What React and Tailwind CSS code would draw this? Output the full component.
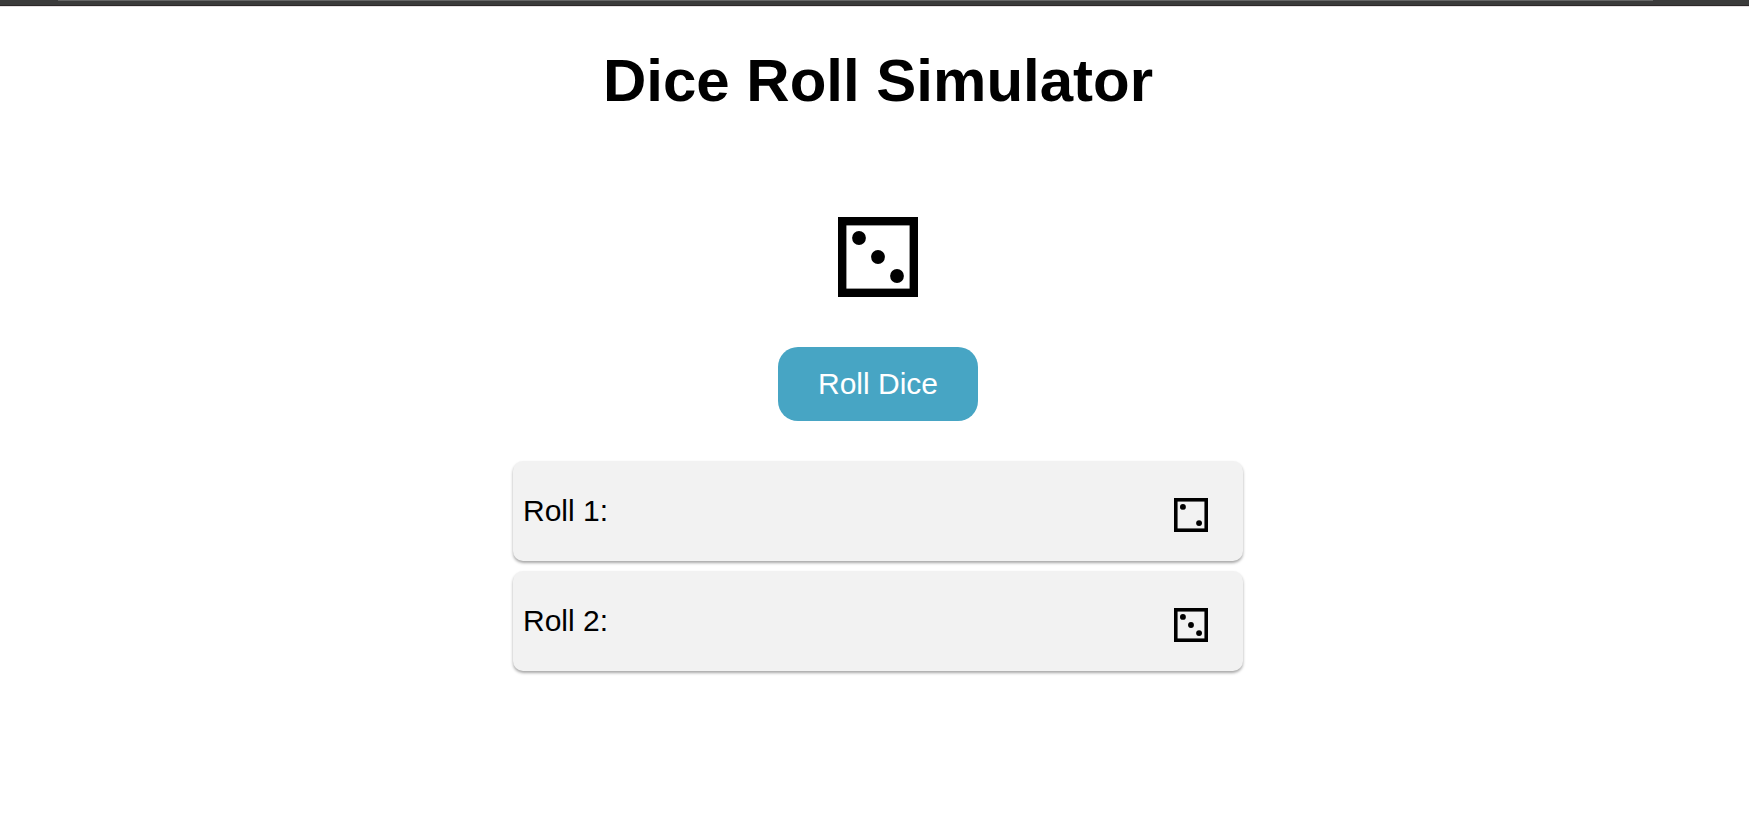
const PIPS = {
  1: [[40, 40]],
  2: [[21, 21], [59, 59]],
  3: [[21, 21], [40, 40], [59, 59]],
  4: [[21, 21], [59, 21], [21, 59], [59, 59]],
  5: [[21, 21], [59, 21], [40, 40], [21, 59], [59, 59]],
  6: [[21, 21], [59, 21], [21, 40], [59, 40], [21, 59], [59, 59]],
};

function Die({ value, className }) {
  return (
    <svg viewBox="0 0 80 80" className={className} role="img" aria-label={`Die showing ${value}`}>
      <rect x="4.2" y="4.2" width="71.6" height="71.6" fill="none" stroke="currentColor" strokeWidth="8.4" />
      {PIPS[value].map(([x, y]) => (
        <circle key={`${x}-${y}`} cx={x} cy={y} r="6.9" fill="currentColor" />
      ))}
    </svg>
  );
}

export default function App() {
  const rolls = [2, 3];
  return (
    <div className="min-h-screen bg-white font-['Liberation_Sans',Arial,sans-serif] text-black">
      <div className="h-[6px] border-b border-[#2b2728] bg-[#3b3b3b] pr-[96px] pl-[58px]">
        <div className="h-px bg-[#666666]" />
      </div>
      <div className="h-px bg-[#e4dfe1]" />
      <main className="flex flex-col items-center pt-10 pl-[7px]">
        <h1 className="text-[60px] leading-[68px] font-bold">Dice Roll Simulator</h1>
        <Die value={3} className="mt-[102px] size-20" />
        <button
          type="button"
          className="mt-[50px] cursor-pointer rounded-[20px] bg-[#47a5c4] px-10 py-5 text-[30px] leading-[34px] text-white"
        >
          Roll Dice
        </button>
        <ul className="mt-10 flex w-full max-w-[730px] flex-col gap-[10px]">
          {rolls.map((value, i) => (
            <li
              key={i}
              className="flex h-[100px] items-center justify-between rounded-[10px] bg-[#f2f2f2] pr-[35px] pl-[10px] text-[30px] leading-[34px] shadow-[0_2px_3px_rgba(0,0,0,0.35)]"
            >
              <span>Roll {i + 1}:</span>
              <span className="pt-2">
                <Die value={value} className="block size-[34px]" />
              </span>
            </li>
          ))}
        </ul>
      </main>
    </div>
  );
}
